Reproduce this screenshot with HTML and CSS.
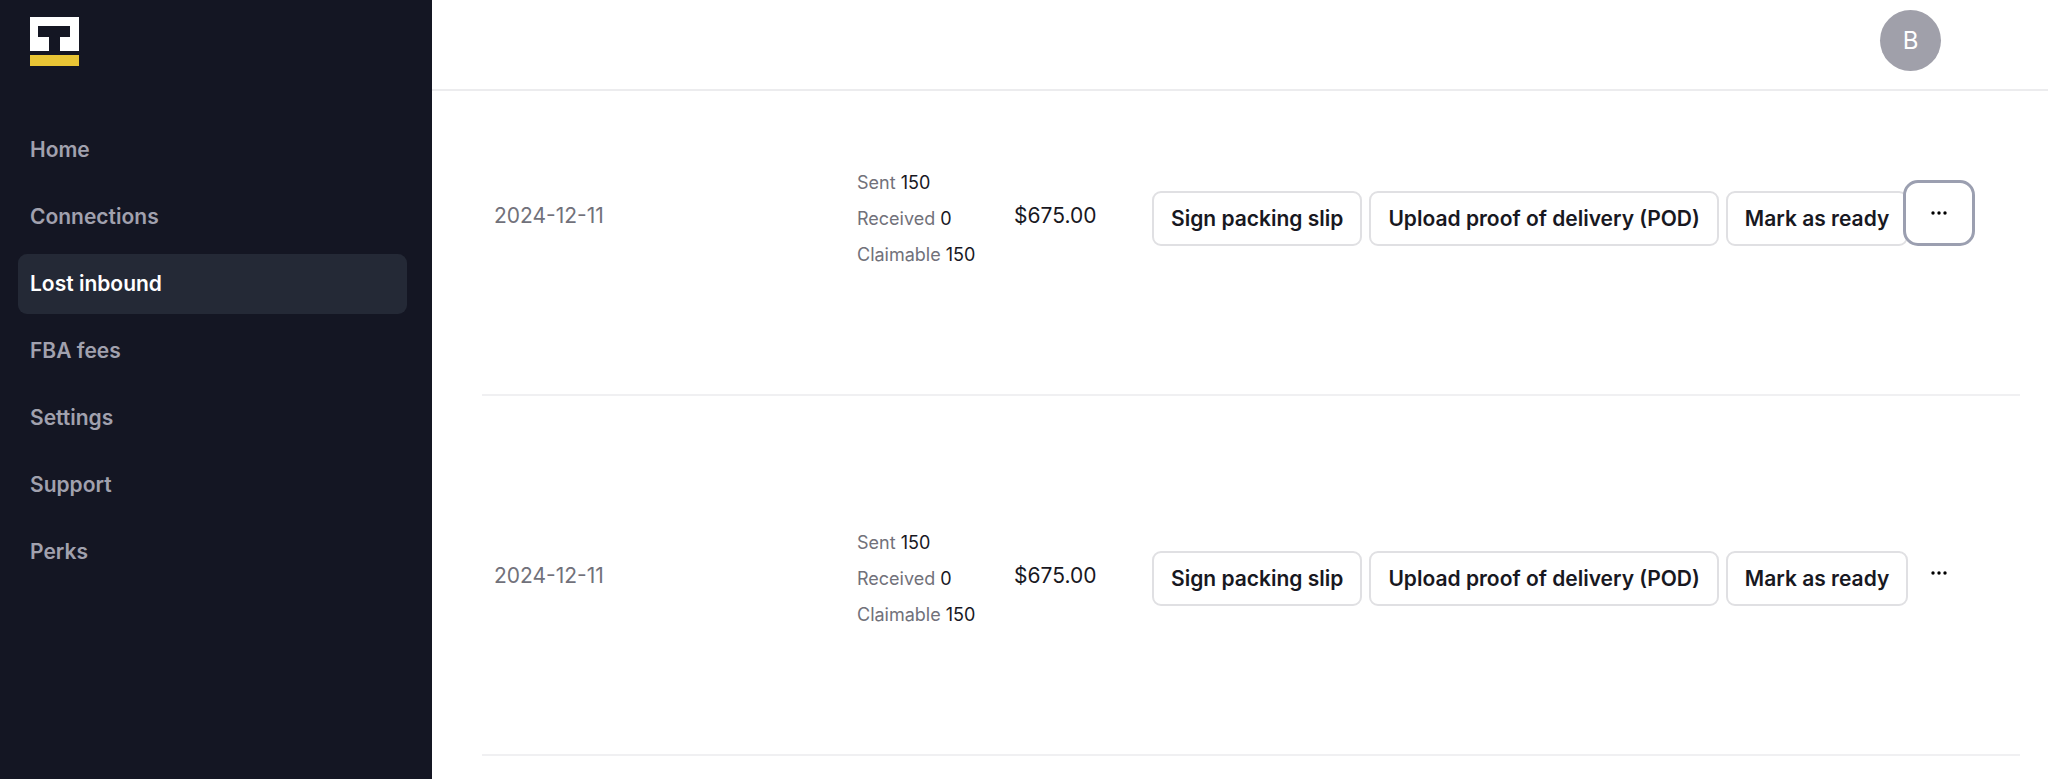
FILE: index.html
```
<!DOCTYPE html>
<html lang="en">
<head>
  <meta charset="UTF-8">
  <meta name="viewport" content="width=device-width, initial-scale=1.0">
  <title>Lost inbound</title>
  <link rel="stylesheet" href="styles.css">
</head>
<body>
  <div class="app">
    <aside class="sidebar">
      <a href="#" class="logo" aria-label="Dashboard">
        <svg width="49" height="49" viewBox="0 0 49 49">
          <path fill="#fff" d="M0 0h49v34H30V20h10V9H8v11h11v14H0z"/>
          <path fill="#e9c535" d="M0 38h49v11H0z"/>
        </svg>
      </a>
      <nav class="nav">
        <a href="#" class="nav-link">Home</a>
        <a href="#" class="nav-link">Connections</a>
        <a href="#" class="nav-link active">Lost inbound</a>
        <a href="#" class="nav-link">FBA fees</a>
        <a href="#" class="nav-link">Settings</a>
        <a href="#" class="nav-link">Support</a>
        <a href="#" class="nav-link">Perks</a>
      </nav>
    </aside>

    <div class="page">
      <header class="topbar">
        <button type="button" class="avatar">B</button>
      </header>

      <main class="content">
        <table class="claims">
          <colgroup>
            <col class="col-date">
            <col class="col-units">
            <col class="col-amount">
            <col>
          </colgroup>
          <tbody>
            <tr>
              <td class="date">2024-12-11</td>
              <td class="units">
                <div>Sent <span>150</span></div>
                <div>Received <span>0</span></div>
                <div>Claimable <span>150</span></div>
              </td>
              <td class="amount">$675.00</td>
              <td>
                <div class="actions">
                  <button type="button" class="btn">Sign packing slip</button>
                  <button type="button" class="btn">Upload proof of delivery (POD)</button>
                  <button type="button" class="btn">Mark as ready</button>
                  <button type="button" class="more open" aria-label="More">
                    <svg width="16" height="4" viewBox="0 0 16 4"><circle cx="2" cy="2" r="1.7"/><circle cx="8" cy="2" r="1.7"/><circle cx="14" cy="2" r="1.7"/></svg>
                  </button>
                </div>
              </td>
            </tr>
            <tr>
              <td class="date">2024-12-11</td>
              <td class="units">
                <div>Sent <span>150</span></div>
                <div>Received <span>0</span></div>
                <div>Claimable <span>150</span></div>
              </td>
              <td class="amount">$675.00</td>
              <td>
                <div class="actions">
                  <button type="button" class="btn">Sign packing slip</button>
                  <button type="button" class="btn">Upload proof of delivery (POD)</button>
                  <button type="button" class="btn">Mark as ready</button>
                  <button type="button" class="more" aria-label="More">
                    <svg width="16" height="4" viewBox="0 0 16 4"><circle cx="2" cy="2" r="1.7"/><circle cx="8" cy="2" r="1.7"/><circle cx="14" cy="2" r="1.7"/></svg>
                  </button>
                </div>
              </td>
            </tr>
          </tbody>
        </table>
      </main>
    </div>
  </div>
</body>
</html>
```
FILE: styles.css
```
* {
  box-sizing: border-box;
}

body {
  margin: 0;
  font-family: Inter, "Liberation Sans", sans-serif;
  font-size: 21px;
  color: #18181f;
  background-color: #fff;
}

button {
  font: inherit;
  color: inherit;
  cursor: pointer;
}

.app {
  display: flex;
  min-height: 100vh;
}

/* Sidebar */
.sidebar {
  flex: 0 0 432px;
  padding: 17px 25px 0 18px;
  background-color: #141623;
}

.logo {
  display: block;
  padding-left: 12px;
}

.logo svg {
  display: block;
}

.nav {
  display: flex;
  flex-direction: column;
  gap: 7px;
  margin-top: 54px;
}

.nav-link {
  padding: 0 12px;
  border-radius: 9px;
  font-weight: 600;
  line-height: 60px;
  color: #a1a1ae;
  text-decoration: none;
}

.nav-link.active {
  color: #fff;
  background-color: #242936;
}

/* Top bar */
.page {
  flex: 1;
  min-width: 0;
}

.topbar {
  position: sticky;
  top: 0;
  z-index: 1;
  display: flex;
  justify-content: flex-end;
  height: 91px;
  padding: 10px 107px 0 0;
  border-bottom: 2px solid #ececee;
  background-color: #fff;
}

.avatar {
  width: 61px;
  height: 61px;
  padding: 0;
  border: 0;
  border-radius: 50%;
  font-size: 24px;
  color: #fff;
  background-color: #a0a0aa;
}

/* Claims table, first row is scrolled partly under the top bar */
.content {
  margin-top: -55px;
  padding: 0 28px 0 50px;
}

.claims {
  width: 100%;
  table-layout: fixed;
  border-collapse: separate;
  border-spacing: 0;
}

.claims td {
  height: 360px;
  padding: 0 12px;
  border-bottom: 2px solid #f0f0f2;
  vertical-align: middle;
}

.col-date {
  width: 363px;
}

.col-units {
  width: 157px;
}

.col-amount {
  width: 138px;
}

.claims .date {
  color: #71717a;
}

.claims .units {
  padding-top: 8px;
  font-size: 18px;
  line-height: 36px;
  color: #71717a;
  white-space: nowrap;
}

.units span {
  color: #18181f;
}

.actions {
  display: flex;
  align-items: flex-end;
  gap: 7px;
  padding-bottom: 4px;
}

.btn {
  height: 55px;
  padding: 0 17px;
  border: 2px solid #e0e0e3;
  border-radius: 9px;
  font-weight: 600;
  white-space: nowrap;
  background-color: #fff;
}

.more {
  display: flex;
  align-items: center;
  justify-content: center;
  width: 72px;
  height: 66px;
  margin-left: -12px;
  padding: 0;
  border: 3px solid transparent;
  border-radius: 15px;
  background: none;
}

.more.open {
  border-color: #9b9fb0;
  background-color: #fff;
}
```
